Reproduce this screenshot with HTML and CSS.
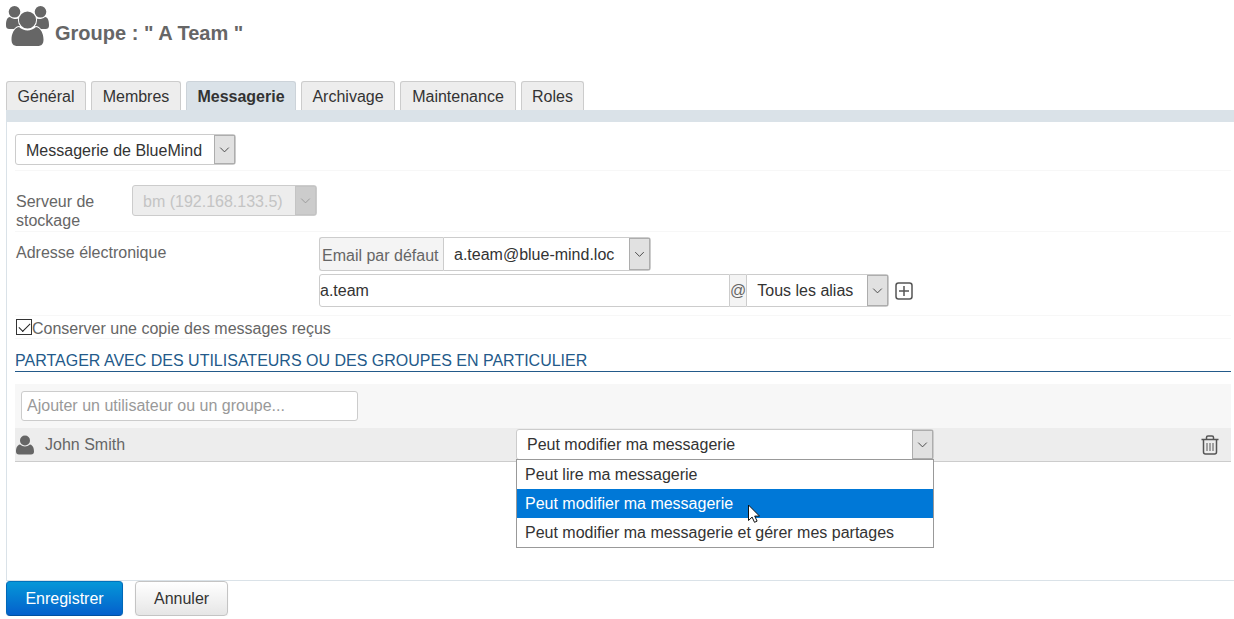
FILE: index.html
```html
<!DOCTYPE html>
<html lang="fr">
<head>
<meta charset="utf-8">
<title>Groupe : A Team</title>
<link rel="stylesheet" href="styles.css">
</head>
<body>
<header class="page-header">
  <svg class="group-icon" viewBox="0 0 44 42" aria-hidden="true">
    <circle cx="8.500" cy="6.800" r="5.800"/>
    <circle cx="34.500" cy="6.800" r="5.800"/>
    <path d="M4 12c3 2.500 7 2.500 10 1v11H4c-3 0-4-1-4-4 0-4 1-8 4-8z"/>
    <path d="M39 12c-3 2.500-7 2.500-10 1v11h10c3 0 4-1 4-4 0-4-1-8-4-8z"/>
    <path class="halo" d="M13 22c5 4.500 12 4.500 17 0 5 1 7.500 7 7.500 12.500 0 4.500-2 6.500-6 6.500h-20c-4 0-6-2-6-6.500C5.500 29 8 23 13 22z"/>
    <circle class="halo" cx="21.500" cy="15" r="8.600"/>
  </svg>
  <h1 class="page-title">Groupe : " A Team "</h1>
</header>

<nav class="tabs">
  <button type="button" class="tab">Général</button>
  <button type="button" class="tab">Membres</button>
  <button type="button" class="tab tab-active">Messagerie</button>
  <button type="button" class="tab">Archivage</button>
  <button type="button" class="tab">Maintenance</button>
  <button type="button" class="tab">Roles</button>
</nav>

<form class="form">
  <div class="panel">
    <div class="row row-type">
      <span class="select type-select">
        <select aria-label="Type de messagerie"><option>Messagerie de BlueMind</option></select>
        <svg class="arrow" viewBox="0 0 20 28" aria-hidden="true"><path d="M5.500 12l4.500 4.500 4.500-4.500"/></svg>
      </span>
    </div>

    <div class="row row-server">
      <label class="server-label" for="server">Serveur de stockage</label>
      <span class="select select-disabled server-select">
        <select id="server" disabled><option>bm (192.168.133.5)</option></select>
        <svg class="arrow" viewBox="0 0 20 28" aria-hidden="true"><path d="M5.500 12l4.500 4.500 4.500-4.500"/></svg>
      </span>
    </div>

    <div class="row row-mail">
      <label class="mail-label" for="alias">Adresse électronique</label>
      <div class="mail-fields">
        <div class="group">
          <label class="addon addon-first" for="default-mail">Email par défaut</label>
          <span class="select select-last default-select">
            <select id="default-mail"><option>a.team@blue-mind.loc</option></select>
            <svg class="arrow" viewBox="0 0 20 28" aria-hidden="true"><path d="M5.500 12l4.500 4.500 4.500-4.500"/></svg>
          </span>
        </div>
        <div class="group">
          <input class="alias-input" id="alias" type="text" value="a.team">
          <span class="addon">@</span>
          <span class="select select-last domain-select">
            <select aria-label="Domaine"><option>Tous les alias</option></select>
            <svg class="arrow" viewBox="0 0 20 28" aria-hidden="true"><path d="M5.500 12l4.500 4.500 4.500-4.500"/></svg>
          </span>
          <button type="button" class="icon-button add-button" aria-label="Ajouter une adresse">
            <svg viewBox="0 0 18 18" width="18" height="18" aria-hidden="true"><rect x="1" y="1" width="16" height="16" rx="2.500"/><path d="M9 4v10M4 9h10"/></svg>
          </button>
        </div>
      </div>
    </div>

    <div class="row row-copy">
      <input class="checkbox" id="copy" type="checkbox" checked>
      <label for="copy">Conserver une copie des messages reçus</label>
    </div>

    <h2 class="section-title">Partager avec des utilisateurs ou des groupes en particulier</h2>

    <div class="share-search">
      <input class="search-input" type="text" placeholder="Ajouter un utilisateur ou un groupe..." aria-label="Ajouter un utilisateur ou un groupe">
    </div>
    <div class="share-row">
      <svg class="user-icon" viewBox="0 0 18 20" aria-hidden="true"><path d="M4 9.500c3 2.600 7 2.600 10 0 3 .6 4 4 4 7 0 2-1 3-3 3H3c-2 0-3-1-3-3 0-3 1-6.400 4-7z"/><circle cx="9" cy="5.500" r="5"/></svg>
      <label class="user-name" for="right">John Smith</label>
      <div class="right-cell">
        <span class="select right-select">
          <select id="right"><option>Peut modifier ma messagerie</option></select>
          <svg class="arrow" viewBox="0 0 20 28" aria-hidden="true"><path d="M5.500 12l4.500 4.500 4.500-4.500"/></svg>
        </span>
        <ul class="menu" role="listbox" aria-label="Droits">
          <li class="menu-item" role="option" aria-selected="false">Peut lire ma messagerie</li>
          <li class="menu-item menu-item-active" role="option" aria-selected="true">Peut modifier ma messagerie</li>
          <li class="menu-item" role="option" aria-selected="false">Peut modifier ma messagerie et gérer mes partages</li>
        </ul>
        <svg class="cursor" viewBox="0 0 12 19" aria-hidden="true"><path d="M.5 1v15.500l3.600-3.400 2.400 5.200 2.600-1.200-2.400-5H11.500z"/></svg>
      </div>
      <button type="button" class="icon-button trash-button" aria-label="Supprimer">
        <svg viewBox="0 0 18 20" width="18" height="20" aria-hidden="true"><path d="M.5 4.500h17M5.500 4V2.500Q5.500 1 7 1h4q1.500 0 1.500 1.500V4M2.500 5v12q0 2 2 2h9q2 0 2-2V5"/><path class="slats" d="M6 8v8M9 8v8M12 8v8"/></svg>
      </button>
    </div>
  </div>

  <div class="actions">
    <button type="submit" class="button button-primary">Enregistrer</button>
    <button type="button" class="button">Annuler</button>
  </div>
</form>
</body>
</html>
```

FILE: styles.css
```css
* {
  box-sizing: border-box;
}

body {
  margin: 0;
  padding: 5px 0 0 6px;
  background: #fff;
  color: #666;
  font: 16px/19px "Liberation Sans", Arial, sans-serif;
}

button,
input,
select {
  margin: 0;
  font: inherit;
}

.page-header {
  display: flex;
  gap: 5px;
  height: 76px;
}

.group-icon {
  width: 44px;
  height: 42px;
  fill: #666;
}

.group-icon .halo {
  stroke: #fff;
  stroke-width: 2px;
  paint-order: stroke;
}

.page-title {
  margin: 16px 0 0;
  font-size: 20px;
  line-height: 24px;
}

.tabs {
  display: grid;
  grid-template-columns: 80px 90px 110px 94px 116px 63px;
  gap: 5px;
  border-bottom: 12px solid #dae2e8;
}

.tab {
  height: 29px;
  padding: 0;
  border: 1px solid #ccc;
  border-bottom: 0;
  border-radius: 3px 3px 0 0;
  background: #ededed;
  color: #333;
}

.tab-active {
  border-color: #ccd3d9;
  background: #dae2e8;
  font-weight: bold;
}

.panel {
  min-height: 459px;
  padding: 12px 3px 0 8px;
  border-left: 1px solid #dae2e8;
  border-bottom: 1px solid #dae2e8;
}

.row {
  display: flex;
  border-bottom: 1px solid #f7f7f7;
}

.row-type {
  padding-bottom: 5px;
}

.select {
  position: relative;
  display: block;
  height: 31px;
  border: 1px solid #ccc;
  border-radius: 3px;
  background: #fff;
}

.select select {
  display: block;
  width: 100%;
  height: 100%;
  padding: 0 32px 0 10px;
  border: 0;
  background: transparent;
  color: #333;
  appearance: none;
}

.arrow {
  position: absolute;
  top: 0;
  right: 0;
  width: 21px;
  height: 100%;
  border: 1px solid #adadad;
  background: #e1e1e1;
  fill: none;
  stroke: #444;
  pointer-events: none;
}

.select-disabled {
  background: #ededed;
}

.select-disabled select {
  color: #c4c4c4;
  opacity: 1;
}

.select-disabled .arrow {
  border-color: #c4c4c4;
  background: #ccc;
  stroke: #999;
}

.type-select {
  width: 221px;
}

.type-select select,
.server-select select {
  padding-top: 2px;
}

.row-server {
  padding: 14px 0 1px;
}

.server-label {
  width: 117px;
  padding: 7px 20px 0 1px;
}

.server-select {
  width: 185px;
}

.row-mail {
  padding: 5px 0 8px;
}

.mail-label {
  width: 304px;
  padding: 6px 0 0 1px;
}

.mail-fields {
  display: grid;
  gap: 3px;
}

.group {
  display: flex;
}

.addon {
  display: flex;
  align-items: center;
  border: solid #ccc;
  border-width: 1px 0;
  background: #f4f4f4;
}

.addon-first {
  width: 124px;
  padding: 2px 2px 0;
  border-left-width: 1px;
  border-radius: 3px 0 0 3px;
}

.select-last {
  height: 34px;
  border-radius: 0 3px 3px 0;
}

.default-select {
  width: 208px;
}

.alias-input {
  width: 411px;
  padding: 0;
  border: 1px solid #ccc;
  border-radius: 3px 0 0 3px;
  color: #333;
}

.domain-select {
  width: 143px;
  height: 33px;
}

.icon-button {
  display: flex;
  padding: 0;
  border: 0;
  background: none;
}

.icon-button svg {
  fill: none;
  stroke: #555;
  stroke-width: 1.500px;
}

.add-button {
  align-self: center;
  margin-left: 6px;
}

.row-copy {
  align-items: center;
  height: 23px;
  padding-left: 1px;
}

.row-copy label {
  padding-top: 3px;
}

.checkbox {
  width: 16px;
  height: 16px;
  border: 1px solid #333;
  background: #fff;
  appearance: none;
}

.checkbox:checked::before {
  content: "";
  display: block;
  width: 10px;
  height: 5px;
  margin: 3px 2px;
  border: solid #222;
  border-width: 0 0 1px 1px;
  transform: rotate(-45deg);
}

.section-title {
  margin: 12px 0;
  border-bottom: 1px solid #235a8a;
  color: #235a8a;
  font-size: 16px;
  font-weight: normal;
  line-height: 20px;
  text-transform: uppercase;
}

.share-search {
  padding: 7px 6px;
  background: #f7f7f7;
}

.search-input {
  display: block;
  width: 337px;
  height: 30px;
  padding: 0 5px;
  border: 1px solid #ccc;
  border-radius: 3px;
}

.search-input::placeholder {
  color: #999;
}

.share-row {
  display: flex;
  align-items: center;
  height: 34px;
  padding: 0 12px 0 1px;
  border-bottom: 1px solid #ccc;
  background: #ededed;
}

.user-icon {
  width: 18px;
  height: 20px;
  fill: #666;
}

.user-name {
  width: 482px;
  padding-left: 11px;
}

.user-icon,
.user-name {
  flex: none;
}

.right-cell {
  position: relative;
  width: 418px;
}

.menu {
  position: absolute;
  top: 30px;
  left: 0;
  width: 100%;
  margin: 0;
  padding: 0;
  border: 1px solid #999;
  background: #fff;
  color: #333;
  list-style: none;
}

.menu-item {
  padding: 5px 8px;
}

.menu-item-active {
  background: #0078d7;
  color: #fff;
}

.cursor {
  position: absolute;
  top: 75px;
  left: 232px;
  width: 12px;
  height: 19px;
  fill: #fff;
  stroke: #111;
}

.trash-button {
  margin-left: auto;
}

.trash-button .slats {
  stroke-width: 1px;
}

.actions {
  display: flex;
  gap: 12px;
}

.button {
  min-width: 93px;
  height: 35px;
  padding: 0 18px;
  border: 1px solid #c4c4c4;
  border-radius: 4px;
  background: linear-gradient(#fff, #e6e6e6);
  color: #333;
  box-shadow: 0 1px 2px #0000000d;
}

.button-primary {
  min-width: 117px;
  border-color: #0072bc #0068b8 #0050a0;
  background: linear-gradient(#0597d8, #0560cc);
  color: #fff;
}
```
